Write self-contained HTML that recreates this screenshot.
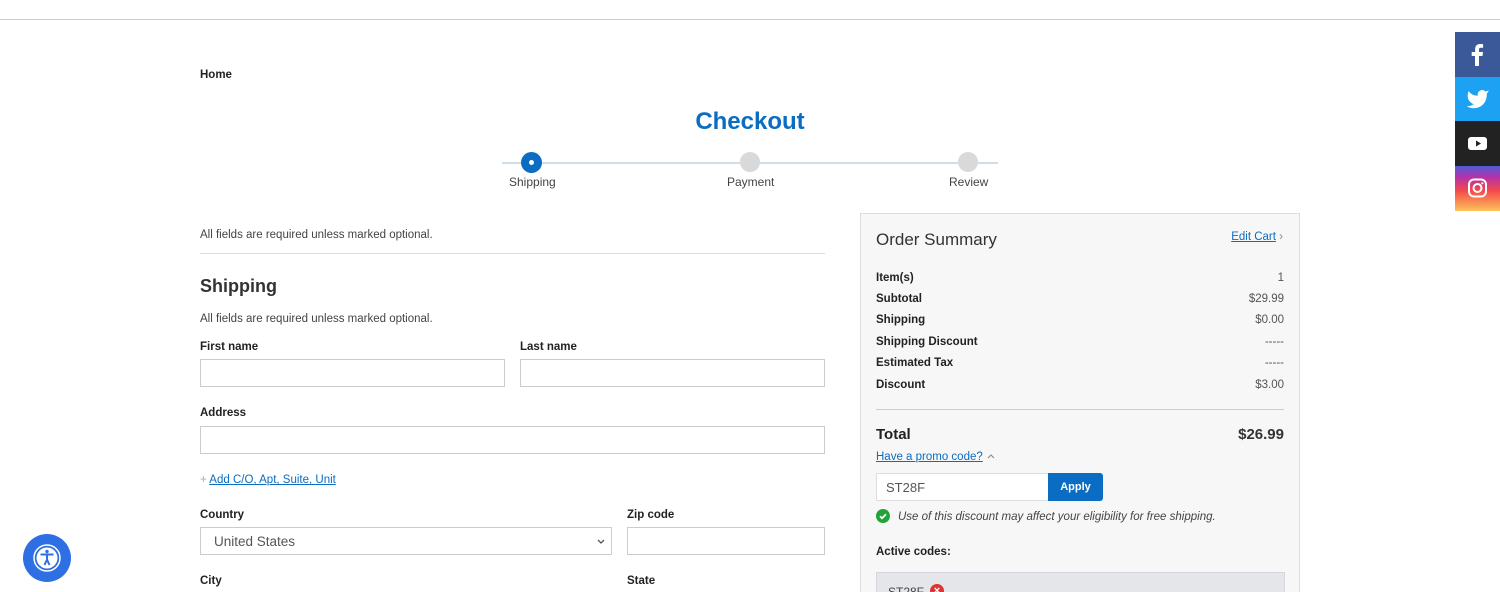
<!DOCTYPE html>
<html style="width:1500px;height:592px;overflow:hidden"><head><meta charset="utf-8"><style>
*{box-sizing:border-box;margin:0;padding:0}
body{width:1500px;height:592px;overflow:hidden;background:#fff;font-family:"Liberation Sans",Arial,sans-serif;color:#333;position:relative}
.a{position:absolute}
.lbl{font-size:11.5px;font-weight:bold;color:#222}
.inp{border:1px solid #ccc;background:#fff;height:28px}
.row{position:absolute;left:15px;right:15px;font-size:11.5px}
.row b{color:#222}
.row span{position:absolute;right:0;color:#555}
</style></head><body>
<div class="a" style="left:0;top:19px;width:1500px;height:1px;background:#ccc"></div>
<div class="a" style="left:200px;top:69px;font-size:11.5px;font-weight:bold;color:#222">Home</div>
<div class="a" style="left:0;width:1500px;top:108px;text-align:center;font-size:24px;font-weight:bold;color:#0a6cc2">Checkout</div>
<div class="a" style="left:502px;top:162px;width:496px;height:2px;background:#cfdde9"></div>
<div class="a" style="left:521px;top:152px;width:21px;height:21px;border-radius:50%;background:#0a6cc2"></div>
<div class="a" style="left:529px;top:160px;width:5px;height:5px;border-radius:50%;background:#fff"></div>
<div class="a" style="left:740px;top:152px;width:20px;height:20px;border-radius:50%;background:#d9d9d9"></div>
<div class="a" style="left:958px;top:152px;width:20px;height:20px;border-radius:50%;background:#d9d9d9"></div>
<div class="a" style="left:509px;top:175px;font-size:12px;color:#444">Shipping</div>
<div class="a" style="left:727px;top:175px;font-size:12px;color:#444">Payment</div>
<div class="a" style="left:949px;top:175px;font-size:12px;color:#444">Review</div>

<div class="a" style="left:200px;top:229px;font-size:11.5px;color:#444">All fields are required unless marked optional.</div>
<div class="a" style="left:200px;top:253px;width:625px;height:1px;background:#ddd"></div>
<div class="a" style="left:200px;top:276px;font-size:18px;font-weight:bold;color:#333">Shipping</div>
<div class="a" style="left:200px;top:313px;font-size:11.5px;color:#444">All fields are required unless marked optional.</div>
<div class="a lbl" style="left:200px;top:341px">First name</div>
<div class="a lbl" style="left:520px;top:341px">Last name</div>
<div class="a inp" style="left:200px;top:359px;width:305px"></div>
<div class="a inp" style="left:520px;top:359px;width:305px"></div>
<div class="a lbl" style="left:200px;top:407px">Address</div>
<div class="a inp" style="left:200px;top:426px;width:625px"></div>
<div class="a" style="left:200px;top:474px;font-size:11.5px;color:#0a6cc2"><span style="color:#aaa">+</span> <u>Add C/O, Apt, Suite, Unit</u></div>
<div class="a lbl" style="left:200px;top:509px">Country</div>
<div class="a lbl" style="left:627px;top:509px">Zip code</div>
<div class="a inp" style="left:200px;top:527px;width:412px;font-size:13.5px;color:#555;padding:6px 13px">United States<svg style="position:absolute;right:6px;top:11px" width="8" height="6"><path d="M1 1l3 3 3-3" stroke="#555" stroke-width="1.3" fill="none"/></svg></div>
<div class="a inp" style="left:627px;top:527px;width:198px"></div>
<div class="a lbl" style="left:200px;top:575px">City</div>
<div class="a lbl" style="left:627px;top:575px">State</div>

<div class="a" style="left:860px;top:213px;width:440px;height:379px;background:#f7f7f7;border:1px solid #ddd;border-bottom:none;overflow:hidden">
<div class="a" style="left:15px;top:16px;font-size:17px;color:#333">Order Summary</div>
<div class="a" style="right:16px;top:17px;font-size:11.5px;color:#0a6cc2"><u>Edit Cart</u> <span style="color:#888">›</span></div>
<div class="row" style="top:58px"><b>Item(s)</b><span>1</span></div>
<div class="row" style="top:79px"><b>Subtotal</b><span>$29.99</span></div>
<div class="row" style="top:100px"><b>Shipping</b><span>$0.00</span></div>
<div class="row" style="top:122px"><b>Shipping Discount</b><span>-----</span></div>
<div class="row" style="top:143px"><b>Estimated Tax</b><span>-----</span></div>
<div class="row" style="top:165px"><b>Discount</b><span>$3.00</span></div>
<div class="a" style="left:15px;right:15px;top:195px;height:1px;background:#ccc"></div>
<div class="row" style="top:212px;font-size:15px"><b>Total</b><span style="font-weight:bold;color:#333">$26.99</span></div>
<div class="a" style="left:15px;top:237px;font-size:11.5px;color:#0a6cc2"><u>Have a promo code?</u> <svg width="10" height="8"><path d="M2 6l3-3 3 3" stroke="#888" stroke-width="1" fill="none"/></svg></div>
<div class="a" style="left:15px;top:259px;width:173px;height:28px;background:#fff;border:1px solid #ddd;font-size:13px;color:#555;padding:6px 9px">ST28F</div>
<div class="a" style="left:187px;top:259px;width:55px;height:28px;background:#0a6cc2;border-radius:0 3px 3px 0;color:#fff;font-size:11px;font-weight:bold;text-align:center;line-height:28px">Apply</div>
<div class="a" style="left:15px;top:295px;width:14px;height:14px;border-radius:50%;background:#22a33a"></div>
<svg class="a" style="left:15px;top:295px" width="14" height="14"><path d="M4 7.2l2 2 4-4" stroke="#fff" stroke-width="1.8" fill="none"/></svg>
<div class="a" style="left:37px;top:297px;font-size:11.5px;font-style:italic;color:#444">Use of this discount may affect your eligibility for free shipping.</div>
<div class="a" style="left:15px;top:332px;font-size:11.5px;font-weight:bold;color:#222">Active codes:</div>
<div class="a" style="left:15px;top:358px;width:409px;height:21px;background:#e4e6ea;border:1px solid #d5d7db;border-bottom:none;overflow:hidden"></div>
<div class="a" style="left:27px;top:371px;height:8px;overflow:hidden;font-size:12px;line-height:14px;color:#444">ST28F</div>
<div class="a" style="left:69px;top:370px;width:14px;height:9px;overflow:hidden"><div style="width:14px;height:14px;border-radius:50%;background:#d33;color:#fff;font-size:11px;line-height:14px;text-align:center;font-weight:bold">×</div></div>
</div>

<div class="a" style="left:1455px;top:32px;width:45px;height:45px;background:#3b5998"><svg width="45" height="45"><path d="M24 34V24h3.5l.5-4h-4v-2.5c0-1.1.4-1.8 2-1.8h2.1v-3.5c-.4 0-1.6-.2-3-.2-3 0-5 1.8-5 5.2V20h-3.4v4H20v10z" fill="#fff"/></svg></div>
<div class="a" style="left:1455px;top:77px;width:45px;height:44px;background:#1da1f2"><svg width="45" height="44" viewBox="0 0 24 24"><g transform="translate(5.5 5.5) scale(0.55)"><path d="M23 3a10.900 10.900 0 0 1-3.140 1.530 4.480 4.480 0 0 0-7.860 3v1A10.660 10.660 0 0 1 3 4s-4 9 5 13a11.640 11.640 0 0 1-7 2c9 5 20 0 20-11.500a4.500 4.500 0 0 0-.08-.83A7.720 7.720 0 0 0 23 3z" fill="#fff"/></g></svg></div>
<div class="a" style="left:1455px;top:121px;width:45px;height:45px;background:#222"><svg width="45" height="45"><rect x="13" y="16" width="19" height="13" rx="3" fill="#fff"/><path d="M21 19.500v6l5-3z" fill="#222"/></svg></div>
<div class="a" style="left:1455px;top:166px;width:45px;height:45px;background:linear-gradient(to top,#fdc35a,#f4494a 45%,#b531a8 75%,#4f5bd5)"><svg width="45" height="45"><rect x="14" y="13.500" width="17" height="17" rx="5" fill="none" stroke="#fff" stroke-width="2"/><circle cx="22.500" cy="22" r="4" fill="none" stroke="#fff" stroke-width="2"/><circle cx="27.300" cy="17.300" r="1.100" fill="#fff"/></svg></div>

<div class="a" style="left:23px;top:534px;width:48px;height:48px;border-radius:50%;background:#2f6fe4"><svg width="48" height="48"><circle cx="24" cy="24" r="13" fill="none" stroke="#fff" stroke-width="1.5"/><circle cx="24" cy="24" r="10.500" fill="#fff"/><circle cx="24" cy="17.500" r="1.700" fill="#2f6fe4"/><path d="M17.500 20.500h13M24 20.500v5M24 25.500l-2.500 5.500M24 25.500l2.500 5.500" stroke="#2f6fe4" stroke-width="2" fill="none"/></svg></div>
</body></html>
